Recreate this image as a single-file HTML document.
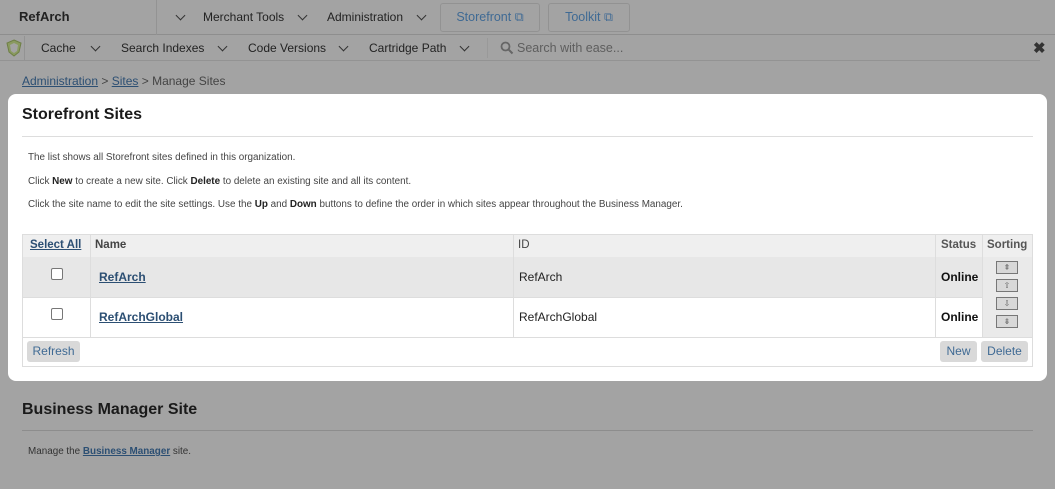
<!DOCTYPE html>
<html><head><style>
*{margin:0;padding:0;box-sizing:border-box}
body{width:1055px;height:489px;background:#a3a3a3;font-family:"Liberation Sans",sans-serif;position:relative;overflow:hidden;color:#222}
.a{position:absolute;white-space:nowrap}
.chev{display:inline-block;width:7px;height:7px;border-right:1.5px solid #333;border-bottom:1.5px solid #333;transform:rotate(45deg);position:absolute}
.lnk{color:#2c4f73;text-decoration:underline}
.btn{position:absolute;background:#d9d9d9;border-radius:3px;color:#3f6a94;font-size:12px;text-align:center;line-height:21px;height:21px}
.sb{position:absolute;width:22px;height:13px;border:1px solid #777;background:#d8d8d8;left:996px;font-size:8px;text-align:center;line-height:11px;color:#666}
.s{font-size:9.9px;color:#444}
</style></head><body>
<div class="a" style="left:0;top:0;width:1055px;height:35px;border-bottom:1px solid #8e8e8e"></div>
<div class="a" style="left:156px;top:0;width:1px;height:35px;background:#939393"></div>
<div class="a" style="left:19px;top:9px;font-size:13px;font-weight:bold;color:#222">RefArch</div>
<span class="chev" style="left:177px;top:12px"></span>
<div class="a" style="left:203px;top:10px;font-size:12px;color:#222">Merchant Tools</div>
<span class="chev" style="left:299px;top:12px"></span>
<div class="a" style="left:327px;top:10px;font-size:12px;color:#222">Administration</div>
<span class="chev" style="left:418px;top:12px"></span>
<div class="a" style="left:440px;top:3px;width:100px;height:29px;border:1px solid #929292;border-radius:3px;font-size:12.5px;color:#3f6a94;text-align:center;line-height:27px">Storefront ⧉</div>
<div class="a" style="left:548px;top:3px;width:82px;height:29px;border:1px solid #929292;border-radius:3px;font-size:12.5px;color:#3f6a94;text-align:center;line-height:27px">Toolkit ⧉</div>
<div class="a" style="left:0;top:60px;width:1040px;height:1px;background:#939393"></div>
<div class="a" style="left:24px;top:36px;width:1px;height:24px;background:#939393"></div>
<svg class="a" style="left:5px;top:39px" width="18" height="18" viewBox="0 0 18 18"><path d="M9 1 L16 4 L14 13 L9 17 L4 13 L2 4 Z" fill="#8a9a60" stroke="#6e7f45"/><path d="M9 4 L13 6 L12 12 L9 14 L6 12 L5 6Z" fill="#a3a3a3"/></svg>
<div class="a" style="left:41px;top:41px;font-size:12px">Cache</div>
<span class="chev" style="left:92px;top:43px"></span>
<div class="a" style="left:121px;top:41px;font-size:12px">Search Indexes</div>
<span class="chev" style="left:219px;top:43px"></span>
<div class="a" style="left:248px;top:41px;font-size:12px">Code Versions</div>
<span class="chev" style="left:340px;top:43px"></span>
<div class="a" style="left:369px;top:41px;font-size:12px">Cartridge Path</div>
<span class="chev" style="left:461px;top:43px"></span>
<div class="a" style="left:487px;top:38px;width:1px;height:20px;background:#999"></div>
<svg class="a" style="left:500px;top:41px" width="14" height="14" viewBox="0 0 14 14"><circle cx="5.5" cy="5.5" r="4" fill="none" stroke="#666" stroke-width="1.8"/><path d="M8.5 8.5 L12.5 12.5" stroke="#666" stroke-width="2"/></svg>
<div class="a" style="left:517px;top:41px;font-size:12.5px;color:#5e5e5e">Search with ease...</div>
<div class="a" style="left:1033px;top:39px;font-size:15px;font-weight:bold;color:#333">✖</div>
<div class="a" style="left:22px;top:74px;font-size:12px;color:#444"><span class="lnk">Administration</span> &gt; <span class="lnk">Sites</span> &gt; Manage Sites</div>
<div class="a" style="left:8px;top:94px;width:1039px;height:287px;background:#fff;border-radius:8px"></div>
<div class="a" style="left:22px;top:106px;font-size:16px;font-weight:bold;color:#1a1a1a">Storefront Sites</div>
<div class="a" style="left:22px;top:136px;width:1011px;height:1px;background:#ddd"></div>
<div class="a s" style="left:28px;top:152px">The list shows all Storefront sites defined in this organization.</div>
<div class="a s" style="left:28px;top:176px">Click <b style="color:#222">New</b> to create a new site. Click <b style="color:#222">Delete</b> to delete an existing site and all its content.</div>
<div class="a s" style="left:28px;top:199px">Click the site name to edit the site settings. Use the <b style="color:#222">Up</b> and <b style="color:#222">Down</b> buttons to define the order in which sites appear throughout the Business Manager.</div>
<div class="a" style="left:22px;top:234px;width:1011px;height:133px;border:1px solid #ddd"></div>
<div class="a" style="left:23px;top:235px;width:1009px;height:22px;background:#efefef"></div>
<div class="a" style="left:23px;top:257px;width:1009px;height:40px;background:#e7e7e7"></div>
<div class="a" style="left:23px;top:297px;width:1009px;height:1px;background:#ddd"></div>
<div class="a" style="left:23px;top:337px;width:1009px;height:1px;background:#ddd"></div>
<div class="a" style="left:90px;top:235px;width:1px;height:102px;background:#ddd"></div>
<div class="a" style="left:513px;top:235px;width:1px;height:102px;background:#ddd"></div>
<div class="a" style="left:935px;top:235px;width:1px;height:102px;background:#ddd"></div>
<div class="a" style="left:982px;top:235px;width:1px;height:102px;background:#ddd"></div>
<div class="a" style="left:983px;top:257px;width:49px;height:80px;background:#eaeaea"></div>
<div class="a" style="left:30px;top:239px;font-size:11.5px;font-weight:bold"><span class="lnk">Select All</span></div>
<div class="a" style="left:95px;top:239px;font-size:11.5px;font-weight:bold;color:#444">Name</div>
<div class="a" style="left:518px;top:239px;font-size:11.5px;color:#444">ID</div>
<div class="a" style="left:941px;top:239px;font-size:11.5px;font-weight:bold;color:#555">Status</div>
<div class="a" style="left:987px;top:239px;font-size:11.5px;font-weight:bold;color:#555">Sorting</div>
<div class="a" style="left:51px;top:268px;width:12px;height:12px;border:1px solid #777;border-radius:2px;background:#fff"></div>
<div class="a" style="left:51px;top:308px;width:12px;height:12px;border:1px solid #777;border-radius:2px;background:#fff"></div>
<div class="a" style="left:99px;top:270px;font-size:12px;font-weight:bold"><span class="lnk">RefArch</span></div>
<div class="a" style="left:99px;top:310px;font-size:12px;font-weight:bold"><span class="lnk">RefArchGlobal</span></div>
<div class="a" style="left:519px;top:270px;font-size:12px;color:#222">RefArch</div>
<div class="a" style="left:519px;top:310px;font-size:12px;color:#222">RefArchGlobal</div>
<div class="a" style="left:941px;top:270px;font-size:12px;font-weight:bold;color:#111">Online</div>
<div class="a" style="left:941px;top:310px;font-size:12px;font-weight:bold;color:#111">Online</div>
<div class="sb" style="top:261px">⇞</div>
<div class="sb" style="top:279px">⇧</div>
<div class="sb" style="top:297px">⇩</div>
<div class="sb" style="top:315px">⇟</div>
<div class="btn" style="left:27px;top:341px;width:53px">Refresh</div>
<div class="btn" style="left:940px;top:341px;width:37px">New</div>
<div class="btn" style="left:981px;top:341px;width:47px">Delete</div>
<div class="a" style="left:22px;top:401px;font-size:16px;font-weight:bold;color:#1a1a1a">Business Manager Site</div>
<div class="a" style="left:22px;top:430px;width:1011px;height:1px;background:#8d8d8d"></div>
<div class="a" style="left:28px;top:446px;font-size:9.9px;color:#333">Manage the <b class="lnk">Business Manager</b> site.</div>
</body></html>
